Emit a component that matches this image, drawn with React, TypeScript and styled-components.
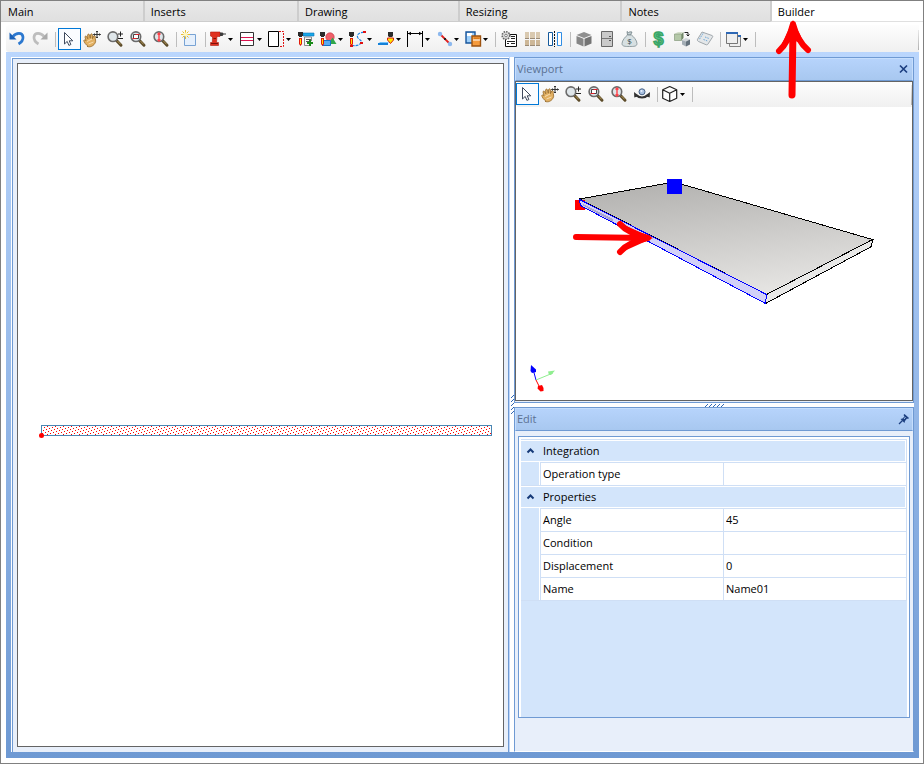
import React from "react";
import styled, { createGlobalStyle, css } from "styled-components";

const line = "#6f9ad3";
const gridLine = "#cfdff5";
const gridFill = "#d3e5fb";
const panelFill = "#e8effa";
const canvasEdge = "#646464";

const GlobalStyle = createGlobalStyle`
  *, *::before, *::after { box-sizing: border-box; }
  html, body, #root { height: 100%; margin: 0; }
  body { font-family: "Open Sans", "Noto Sans", sans-serif; font-size: 11px; line-height: 16px; color: #000; background: #fff; }
  button, input { font: inherit; color: inherit; }
`;

const Window = styled.div`
  display: flex;
  flex-direction: column;
  min-height: 100%;
  border: 1px solid #808080;
  background: #fff;
`;

const TabBar = styled.nav`
  display: flex;
  height: 21px;
`;

const Tab = styled.button<{ $grow: number; $active?: boolean }>`
  position: relative;
  flex: ${(p) => p.$grow} 1 0;
  min-width: 0;
  padding: 2px 0 0 6px;
  border: 0;
  border-left: 2px solid #cdcdcd;
  border-bottom: 1px solid ${(p) => (p.$active ? "#e0e0e0" : "#cdcdcd")};
  background: ${(p) => (p.$active ? "#fff" : "linear-gradient(#e8e8e8, #e0e0e0)")};
  text-align: left;
  &:first-child { border-left: 0; padding-left: 7px; }
`;

const TabPointer = styled.svg`
  position: absolute;
  top: 18px;
  left: 3px;
  z-index: 2;
  pointer-events: none;
`;

const Body = styled.main`
  flex: 1;
  display: flex;
  flex-direction: column;
  padding: 3px 4px 5px 5px;
`;

const ToolStrip = styled.div<{ $compact?: boolean }>`
  display: flex;
  align-items: flex-start;
  height: ${(p) => (p.$compact ? 25 : 27)}px;
  padding-top: ${(p) => (p.$compact ? 1 : 3)}px;
  border-radius: 3px 0 0 3px;
  background: linear-gradient(#fdfdfd, #f0f0f0);
  &::after {
    content: "";
    width: 1px;
    height: 20px;
    margin: 2px 0 0 auto;
    background: linear-gradient(#e8e8e8, #b0b0b0);
  }
`;

const ToolButton = styled.button<{ $split?: boolean; $active?: boolean }>`
  display: flex;
  align-items: center;
  flex: none;
  width: ${(p) => (p.$split ? 29 : 23)}px;
  height: 22px;
  padding: 0;
  border: 1px solid ${(p) => (p.$active ? "#0078d7" : "transparent")};
  background: ${(p) => (p.$active ? "#fafcff" : "transparent")};
`;

const IconSvg = styled.svg`
  flex: none;
  width: 20px;
  height: 20px;
`;

const DropArrow = styled.svg`
  flex: none;
  width: 5px;
  height: 3px;
  margin-left: -1px;
`;

const ToolSeparator = styled.span`
  flex: none;
  width: 6px;
  height: 15px;
  margin-top: 4px;
  background: linear-gradient(#bdbdbd, #bdbdbd) 3px 0 / 1px 100% no-repeat;
`;

const Workspace = styled.div`
  flex: 1;
  display: flex;
  padding: 5px 5px 6px 5px;
  background: linear-gradient(#bad6fd, #6e99d3);
`;

const Columns = styled.div`
  flex: 1;
  display: grid;
  grid-template-columns: minmax(0, 497fr) 5px minmax(0, 400fr);
  padding-left: 1px;
  background: #fff;
`;

const PlanPanel = styled.section`
  display: flex;
  margin-top: 1px;
  padding: 4px 4px 5px;
  border: 1px solid ${line};
  border-bottom: 0;
  background: ${panelFill};
`;

const PlanCanvas = styled.div`
  flex: 1;
  display: flex;
  border: 1px solid ${canvasEdge};
  background: #fff;
`;

const Drawing = styled.svg`
  flex: 1;
  display: block;
  min-width: 0;
  min-height: 0;
`;

const ColumnSplitter = styled.div`
  display: flex;
  align-items: center;
  justify-content: center;
  border-left: 1px solid #bfd7fb;
`;

const RowSplitter = styled.div`
  display: flex;
  align-items: center;
  justify-content: center;
`;

const Stack = styled.div`
  display: grid;
  grid-template-rows: minmax(0, 346fr) 4px minmax(0, 345fr);
`;

const Panel = styled.section<{ $open?: boolean }>`
  display: flex;
  flex-direction: column;
  min-height: 0;
  border: 1px solid ${line};
  ${(p) => p.$open && css`border-bottom-color: #fff;`}
  background: ${panelFill};
`;

const PanelHeader = styled.header`
  display: flex;
  align-items: center;
  flex: none;
  height: 23px;
  padding: 0 2px 2px 1px;
  border: 1px solid #c6defd;
  border-bottom: 1px solid ${line};
  background: linear-gradient(#b6d3fb, #a8c8f0);
`;

const PanelTitle = styled.h2`
  flex: 1;
  margin: 0;
  font-size: 11px;
  font-weight: 400;
  color: #5b7193;
`;

const HeaderButton = styled.button`
  display: flex;
  padding: 0;
  border: 0;
  background: none;
`;

const ViewBox = styled.div`
  flex: 1;
  display: flex;
  flex-direction: column;
  min-height: 0;
  margin-bottom: 1px;
  border: 1px solid ${canvasEdge};
  background: #fff;
`;

const PropertyBox = styled.div`
  flex: 1;
  margin: 5px 3px 33px;
  padding: 2px 2px 0;
  border: 1px solid ${line};
  background: linear-gradient(${gridFill}, ${gridFill}) content-box, #fff;
`;

const PropertyTable = styled.table`
  width: 100%;
  table-layout: fixed;
  border-spacing: 0;
  border-bottom: 1px solid ${gridLine};
`;

const GutterCell = styled.td`
  padding: 0;
  border-right: 1px solid #fff;
  background: ${gridFill};
`;

const CategoryCell = styled.th`
  height: 23px;
  padding: 0;
  border-top: 1px solid ${gridLine};
  border-right: 1px solid ${gridLine};
  font-weight: 400;
  text-align: left;
`;

const CategoryButton = styled.button`
  display: flex;
  align-items: center;
  gap: 8px;
  width: 100%;
  height: 22px;
  padding: 0 0 0 5px;
  border: solid #fff;
  border-width: 1px 1px 1px 0;
  background: ${gridFill};
  text-align: left;
`;

const NameCell = styled.th`
  height: 23px;
  padding: 0 2px;
  border-top: 1px solid ${gridLine};
  border-left: 1px solid ${gridLine};
  background: #fff;
  font-weight: 400;
  text-align: left;
`;

const ValueCell = styled.td`
  height: 23px;
  padding: 0 2px;
  border: solid ${gridLine};
  border-width: 1px 1px 0 1px;
  background: #fff;
`;

const ValueInput = styled.input`
  display: block;
  width: 100%;
  height: 16px;
  line-height: 16px;
  padding: 0;
  border: 0;
  background: transparent;
  outline: none;
`;

const lens = (
  <>
    <path d="M11.5 11.5l4.5 4.7" stroke="#5b4a28" strokeWidth="3" strokeLinecap="round" />
    <path d="M12.5 12l3.2 3.4" stroke="#b39a5c" strokeWidth="1" />
    <circle cx="7.9" cy="7.7" r="4.8" fill="#dfe6ea" stroke="#6b6b6b" strokeWidth="1.6" />
  </>
);

const marker = (x: number) => (
  <>
    <path d={`M${x} 3h5v4h-1v1h-3v-1h-1z`} fill="#2b2b2b" />
    <path d={`M${x + 1} 9h3v6l-1.5 2-1.5-2z`} fill="#e11b0c" />
    <path d={`M${x + 2} 10h1v5h-1z`} fill="#ffe600" />
  </>
);

const hand = (
  <>
    <path d="M6 17.3C3.8 15.8 2 12.9 1.7 11.6c.4-.9 1.3-.8 2.3.2L3 8c0-1.2 1.3-1.3 1.8-.2l1 2L5.6 6c.2-1.2 1.6-1.2 1.9 0l.8 3.2.3-3.6c.3-1.1 1.6-1 1.8.1l.1 3.900 1.100-2.600c.6-.9 1.700-.4 1.600.6-.4 2.400 1.600 4.500-.5 7.100-1.500 2.400-5 4-7.600 2.600z" fill="#e2b062" stroke="#94682a" strokeWidth=".8" />
    <path d="M5 12.5l5-2.5M6.5 15l5-2" stroke="#f9ddb0" strokeWidth="1" />
    <path d="M15 2v7M11.5 5.5h7M14 3l1-1 1 1M14 8l1 1 1-1M12.5 4.500l-1 1 1 1M17.500 4.500l1 1-1 1" stroke="#333" strokeWidth="1" fill="none" />
  </>
);

const icons: Record<string, React.ReactNode> = {
  undo: (
    <>
      <path d="M6 7.5C9 3.5 15.5 3 16 8c.2 3.500-2 5.600-4.500 7" fill="none" stroke="#2c78cf" strokeWidth="2.7" />
      <path d="M2.5 3.500v7H9.500z" fill="#1c62b8" />
    </>
  ),
  redo: (
    <>
      <path d="M14 7.5C11 3.5 4.5 3 4 8c-.2 3.500 2 5.600 4.500 7" fill="none" stroke="#bdbdbd" strokeWidth="2.7" />
      <path d="M17.5 3.500v7h-7z" fill="#aaa" />
    </>
  ),
  pointer: <path d="M5.5 3.5v11.5l2.7-2.6 1.700 4 2-.9-1.700-3.700h3.600z" fill="#fff" stroke="#3f4a5e" />,
  hand,
  zoom: (
    <>
      {lens}
      <path d="M13 5h5M15.5 2.500v5M13 9.500h5" stroke="#222" fill="none" />
    </>
  ),
  zoomArea: (
    <>
      {lens}
      <path d="M5.500 5.500h5v4h-5z" fill="#fff" stroke="#444" />
      <path d="M4.500 9.500h4M7.500 5.500h4" stroke="#e0202a" strokeWidth="1.2" />
    </>
  ),
  zoomFit: (
    <>
      {lens}
      <path d="M8 4v8M6.500 5.500L8 4l1.500 1.500M6.500 10.500L8 12l1.500-1.500" stroke="#ff4048" strokeWidth="1.400" fill="none" />
    </>
  ),
  create: (
    <>
      <path d="M4.5 5.5h11v11h-11z" fill="#e6f0fc" stroke="#78a3d4" />
      <path d="M5.5 1v9M1 5.5h9M2.5 2.5l6 6M8.5 2.5l-6 6" stroke="#e8bf2e" strokeWidth="1" />
      <circle cx="5.5" cy="5.5" r="2" fill="#fff6bc" />
    </>
  ),
  drill: (
    <>
      <path d="M1.5 3H11v4.500H8l-.5 6H9.500v3h-8v-3h1.800L3.500 8 1.500 7z" fill="#e0301f" stroke="#b01c10" strokeWidth=".6" />
      <path d="M4.500 9.500H7M2 14.500h7" stroke="#7d1009" />
      <path d="M11 3.500h2.500l1 1H17v1h-2.500l-1 1.500H11z" fill="#3c3c3c" />
    </>
  ),
  panelRows: (
    <>
      <path d="M2.5 3.5h13v13h-13z" fill="#fff" stroke="#333" />
      <path d="M3 8.500h12M3 11.500h12" stroke="#dc1450" />
    </>
  ),
  extend: (
    <>
      <path d="M12 2.500h4.500v15H12" fill="none" stroke="#e01010" strokeDasharray="2 1" />
      <path d="M1.500 2.500h10v15h-10z" fill="#fff" stroke="#000" />
    </>
  ),
  listAdd: (
    <>
      <path d="M8.500 8v8.500h5M8.500 8h7v4" fill="#f6f6f6" stroke="#888" />
      <path d="M10 10.500h5M10 12.500h3" stroke="#555" />
      <path d="M7 4h11v3H7z" fill="#18a8e8" stroke="#0a6fb5" strokeWidth=".6" />
      <path d="M14 11v6M11 14h6" stroke="#188a18" strokeWidth="2" />
      {marker(2)}
    </>
  ),
  shapes: (
    <>
      <circle cx="11" cy="8" r="4.2" fill="#f0606a" stroke="#c0303a" strokeWidth=".6" />
      <path d="M13.500 8.500l4 6.500h-8z" fill="#2fa64b" />
      <path d="M3.500 11.500h8v5h-8z" fill="#58aaf2" stroke="#1673c9" />
      {marker(1)}
    </>
  ),
  spline: (
    <>
      <path d="M16 3.500C11 3 8 6 10 9c2 2.500 5 3 2.500 5.500-2 2.200-5 2.200-9 2" fill="none" stroke="#1c86e6" strokeWidth="1.2" strokeDasharray="3 1" />
      <path d="M15 2h3v2h-3zM12 13h3v2h-3zM2 16h3v2H2z" fill="#e01010" />
      {marker(1)}
    </>
  ),
  edge: (
    <>
      <path d="M1 15h9l2-2H3z" fill="#6fc1fa" />
      <path d="M1 14h10v2H1z" fill="#1480d8" />
      <path d="M11 3h5v4l-1 1h-3l-1-1z" fill="#2b2b2b" />
      <path d="M10.500 9h6v2l-3 3.500-3-3.500z" fill="#ffe600" stroke="#d8200c" />
    </>
  ),
  dimension: (
    <>
      <path d="M1.500 2v16M16.500 2v16M2 4.500h15" stroke="#000" />
      <path d="M2 4.500l3-1.700v3.400zM16 4.500l-3-1.700v3.400z" fill="#000" />
    </>
  ),
  segment: (
    <>
      <path d="M5 5l9.500 9.500" stroke="#e02020" strokeWidth="1.8" />
      <circle cx="5" cy="5" r="2.200" fill="#8cb8ee" />
      <circle cx="15" cy="15" r="2.200" fill="#8cb8ee" />
      <path d="M9 9h2v2H9z" fill="#222" />
    </>
  ),
  duplicate: (
    <>
      <path d="M2 3h9v11H2z" fill="#9fd0fb" stroke="#17549b" strokeWidth="1.400" />
      <path d="M3 4h5v3H3z" fill="#fff" />
      <path d="M8 7h8.500v10H8z" fill="#f59a3c" stroke="#9d5310" strokeWidth="1.400" />
      <path d="M9 11h7" stroke="#fff" />
      <path d="M10 8.500h5V10h-5z" fill="#d97a1c" />
    </>
  ),
  sheet: (
    <>
      <path d="M6.500 5.500h11v12h-11z" fill="#fff" stroke="#111" />
      <path d="M12 7.500h4M12 9.500h4M8 12.500h8M8 14.500h2M12 14.500h4" stroke="#222" />
      <circle cx="7" cy="6.500" r="3.800" fill="#ddd" stroke="#666" strokeDasharray="1.500 1" strokeWidth="1.600" />
      <circle cx="7" cy="6.500" r="1.300" fill="#fff" stroke="#555" strokeWidth=".7" />
    </>
  ),
  tiles: (
    <>
      <path d="M3 3h4v6H3zM8 3h5v6H8zM14 3h4v6h-4z" fill="#d9c9b0" />
      <path d="M3 11h4v5H3zM8 11h5v5H8zM14 11h4v5h-4z" fill="#cdb797" />
      <path d="M3 9h4v1H3zM8 9h5v1H8zM14 9h4v1h-4zM3 16h4v1H3zM8 16h5v1H8zM14 16h4v1h-4z" fill="#9a8a76" />
    </>
  ),
  mirror: (
    <>
      <path d="M3.500 3.500h4v13h-4z" fill="#fff" stroke="#155a9c" />
      <path d="M12.500 3.500h4v13h-4z" fill="#fff" stroke="#2f8de4" />
      <path d="M9.500 2v16" stroke="#111" strokeDasharray="2 1" />
    </>
  ),
  block: (
    <>
      <path d="M10 3l7.500 3L10 9 2.500 6z" fill="#8f8f8f" />
      <path d="M2.500 7l7 2.800V17.500l-7-3z" fill="#868686" />
      <path d="M17.500 7l-7 2.800V17.500l7-3z" fill="#747474" />
    </>
  ),
  cabinet: (
    <>
      <path d="M4.500 2.500h11v15h-11z" fill="#cacaca" stroke="#686868" />
      <path d="M5 9.500h10" stroke="#777" />
      <path d="M12 7.500h2M12 11.500h2" stroke="#555" />
    </>
  ),
  budget: (
    <>
      <path d="M7 2.500l1.500 1 1.500-.7 2 .2-1.500 3h-3z" fill="#c4cfd2" stroke="#6f7f84" strokeWidth=".8" />
      <path d="M7.500 6h4c2 1.500 5.500 5.500 5.500 8.500 0 3-3 3-7.500 3s-7.500 0-7.500-3C2 11.500 5.500 7.500 7.500 6z" fill="#d7e0e2" stroke="#7c8b90" strokeWidth=".8" />
      <text x="9.5" y="15" fontSize="8" textAnchor="middle" fill="#33474d">$</text>
    </>
  ),
  price: (
    <text x="9.500" y="16" fontFamily="Liberation Sans, sans-serif" fontSize="18" fontWeight="700" textAnchor="middle" fill="#5cc487" stroke="#3aa567" strokeWidth="1.400">$</text>
  ),
  convert: (
    <>
      <path d="M3 4.500l3-1.500h5l-2 2z" fill="#d5e0ca" />
      <path d="M2.500 5h7v6.500h-7z" fill="#b4c8a8" stroke="#869b7c" strokeWidth=".7" />
      <path d="M9.500 5l2-2v6l-2 2.500z" fill="#718766" />
      <path d="M10 11l4-2 4 1.500-4 2z" fill="#cfd4d8" />
      <path d="M10 11l4 1.500v5l-4-2z" fill="#a3adb5" />
      <path d="M14 12.500l4-2v5l-4 2z" fill="#64717c" />
      <path d="M12.500 3.500h3.500v3.500M14.500 5.500l1.500 1.500 1.500-1.500" fill="none" stroke="#222" />
    </>
  ),
  tag: (
    <>
      <path d="M7 3l10 3.500c1 .4.8 1.200.4 1.800L13 15c-.5.8-1.200 1-2 .7L3.500 12.500c-1-.5-1.500-1.500-.8-2.500z" fill="#e4e7e9" stroke="#969ea4" strokeWidth=".9" />
      <path d="M8 4.500L4 11M10 8l4 1.500M8.500 10.500l4 1.500" stroke="#6ea8d8" strokeDasharray="1.500 1" />
    </>
  ),
  windows: (
    <>
      <path d="M5.500 6.500h11v11h-11z" fill="#eee" stroke="#828282" />
      <path d="M14 6h3v2h-3z" fill="#2e68b5" />
      <path d="M2.500 3.500h11v11h-11z" fill="#efefef" stroke="#777" />
      <path d="M2 3h12v2H2z" fill="#2e68b5" />
    </>
  ),
  orbit: (
    <>
      <circle cx="10" cy="7.800" r="3" fill="#a8c0e0" stroke="#4a6488" />
      <circle cx="9.500" cy="7" r="1" fill="#eaf2ff" />
      <path d="M4 11c3 3.300 9 3.300 12 0" fill="none" stroke="#333" strokeWidth="2" />
      <path d="M2 8l.3 5.500L7 12zM18 8l-.3 5.500L13 12z" fill="#333" />
    </>
  ),
  box: (
    <path d="M8.700 2.500l7 3.300v8.400l-7 3.300-7-3.300V5.800zM1.700 5.800l7 3.400 7-3.400M8.700 9.200v8.300" fill="#fff" stroke="#222" strokeWidth="1.200" strokeLinejoin="round" />
  ),
};

type ToolDef = { icon: string; label: string; split?: boolean; active?: boolean } | null;

const t = (icon: string, label: string): ToolDef => ({ icon, label });
const menu = (icon: string, label: string): ToolDef => ({ icon, label, split: true });

const mainTools: ToolDef[] = [
  t("undo", "Undo"), t("redo", "Redo"), null,
  { icon: "pointer", label: "Select", active: true }, t("hand", "Pan"), t("zoom", "Zoom"),
  t("zoomArea", "Zoom area"), t("zoomFit", "Zoom to fit"), null,
  t("create", "New"), null,
  menu("drill", "Drilling"), menu("panelRows", "Panel"), menu("extend", "Extend"),
  t("listAdd", "Add operation"), menu("shapes", "Shapes"), menu("spline", "Contour"),
  menu("edge", "Edge"), menu("dimension", "Dimension"), menu("segment", "Line"),
  menu("duplicate", "Duplicate"), null,
  t("sheet", "Drawing sheet"), t("tiles", "Materials"), t("mirror", "Mirror"), null,
  t("block", "Solid"), t("cabinet", "Cabinet"), t("budget", "Budget"), null,
  t("price", "Price"), t("convert", "Convert"), t("tag", "Label"), null,
  menu("windows", "Windows"), null,
];

const viewTools: ToolDef[] = [
  { icon: "pointer", label: "Select", active: true }, t("hand", "Pan"), t("zoom", "Zoom"),
  t("zoomArea", "Zoom area"), t("zoomFit", "Zoom to fit"), t("orbit", "Orbit"), null,
  menu("box", "View"), null,
];

function Tools({ items, compact }: { items: ToolDef[]; compact?: boolean }) {
  return (
    <ToolStrip $compact={compact} role="toolbar">
      {items.map((item, i) =>
        item ? (
          <ToolButton key={i} $split={item.split} $active={item.active} aria-label={item.label}>
            <IconSvg viewBox="0 0 20 20" fill="none">{icons[item.icon]}</IconSvg>
            {item.split && (
              <DropArrow viewBox="0 0 5 3"><path d="M0 0h5L2.500 3z" fill="#000" /></DropArrow>
            )}
          </ToolButton>
        ) : (
          <ToolSeparator key={i} />
        )
      )}
    </ToolStrip>
  );
}

const tabs = [
  { label: "Main", grow: 142 },
  { label: "Inserts", grow: 154 },
  { label: "Drawing", grow: 161 },
  { label: "Resizing", grow: 163 },
  { label: "Notes", grow: 149 },
  { label: "Builder", grow: 153, active: true },
];

const groups = [
  { name: "Integration", rows: [["Operation type", ""]] },
  { name: "Properties", rows: [["Angle", "45"], ["Condition", ""], ["Displacement", "0"], ["Name", "Name01"]] },
];

function Plan() {
  return (
    <Drawing viewBox="0 0 485 682">
      <defs>
        <pattern id="stipple" width="8" height="8" patternUnits="userSpaceOnUse" x="24" y="362">
          <path d="M5 0h1v1h-1zM2 1h1v1h-1zM7 2h1v1h-1zM4 3h1v1h-1zM1 4h1v1h-1zM6 5h1v1h-1zM3 6h1v1h-1zM0 7h1v1h-1z" fill="#f00" />
        </pattern>
      </defs>
      <g shapeRendering="crispEdges">
        <rect x="23.500" y="361.500" width="450" height="10" fill="url(#stipple)" stroke="#4a86b4" />
      </g>
      <circle cx="23.500" cy="371.500" r="2.500" fill="#f00" />
    </Drawing>
  );
}

function Scene() {
  return (
    <Drawing viewBox="0 0 396 293">
      <defs>
        <linearGradient id="top" x1="0.300" y1="0" x2="0.600" y2="1">
          <stop offset="0" stopColor="#b4b3b1" />
          <stop offset="1" stopColor="#e6e5e3" />
        </linearGradient>
      </defs>
      <g shapeRendering="crispEdges">
        <path d="M63.500 92L158 75 356.500 132.500 250.500 187.500z" fill="url(#top)" stroke="#000" />
        <path d="M59 93h10v10H59z" fill="#f00" />
        <path d="M250.500 187.500L356.500 132.500 355.500 139.500 249.500 196.500z" fill="#e9e9e8" stroke="#000" />
        <path d="M63.500 92.500L250.500 187.500 249.500 196.500 64.500 98.500z" fill="#d3d1f8" stroke="#00f" />
        <path d="M67 97l30 15v3L66 98z" fill="#a9a6d0" />
      </g>
      <path d="M151 72h15v15h-15z" fill="#00f" />
      <g fill="none" stroke="#f00" strokeWidth="6" strokeLinecap="round" strokeLinejoin="round">
        <path d="M60 130l70 1" />
        <path d="M104 117c6 7 16 11 28 14-12 2-22 7-28 14" />
      </g>
      <path d="M106 117l31 14-31 14 11-14z" fill="#f00" />
      <path d="M20 273l-3-11" stroke="#00f" />
      <path d="M20 273l17-7" stroke="#90ee90" />
      <path d="M20 273l4 8" stroke="#f00" />
      <path d="M15 258l5 4.500v2.500l-4 1-1.500-2z" fill="#00f" />
      <path d="M32 264.500l7-1-4 4.500h-2z" fill="#90ee90" />
      <path d="M22 279l4-1 1.500 3v3l-3 .5-3-3z" fill="#f00" />
    </Drawing>
  );
}

export default function App() {
  return (
    <>
      <GlobalStyle />
      <Window>
        <TabBar>
          {tabs.map((tab) => (
            <Tab key={tab.label} $grow={tab.grow} $active={tab.active}>
              {tab.label}
              {tab.active && (
                <TabPointer width="40" height="82" viewBox="0 0 40 82" aria-hidden="true">
                  <path d="M18 9l-1 67" stroke="#f00" strokeWidth="7" strokeLinecap="round" />
                  <path d="M18 5C15 17 11 26 4 32M18 5c3 12 8 20 15 26" fill="none" stroke="#f00" strokeWidth="6" strokeLinecap="round" />
                  <path d="M18 1l12 25-12-5-13 8z" fill="#f00" />
                </TabPointer>
              )}
            </Tab>
          ))}
        </TabBar>
        <Body>
          <Tools items={mainTools} />
          <Workspace>
            <Columns>
              <PlanPanel aria-label="Plan">
                <PlanCanvas><Plan /></PlanCanvas>
              </PlanPanel>
              <ColumnSplitter>
                <svg width="3" height="19" viewBox="0 0 3 19">
                  <path d="M0 3l3-3M0 7l3-3M0 11l3-3M0 15l3-3M0 19l3-3" stroke="#2f66b4" />
                </svg>
              </ColumnSplitter>
              <Stack>
                <Panel>
                  <PanelHeader>
                    <PanelTitle>Viewport</PanelTitle>
                    <HeaderButton aria-label="Close viewport">
                      <svg width="13" height="12" viewBox="0 0 13 12">
                        <path d="M3 2.500l7 7M10 2.500l-7 7" stroke="#1c3f80" strokeWidth="1.700" />
                      </svg>
                    </HeaderButton>
                  </PanelHeader>
                  <ViewBox>
                    <Tools items={viewTools} compact />
                    <Scene />
                  </ViewBox>
                </Panel>
                <RowSplitter>
                  <svg width="19" height="3" viewBox="0 0 19 3">
                    <path d="M0 3l3-3M4 3l3-3M8 3l3-3M12 3l3-3M16 3l3-3" stroke="#2f66b4" />
                  </svg>
                </RowSplitter>
                <Panel $open>
                  <PanelHeader>
                    <PanelTitle>Edit</PanelTitle>
                    <HeaderButton aria-label="Pin panel">
                      <svg width="13" height="12" viewBox="0 0 13 12">
                        <path d="M7.500 1l4.500 4-1 1-1-.5L8 8l-.5 2L3.500 6l2-.5L7.500 3.500 6.500 2z" fill="#1c3f80" />
                        <path d="M5.500 7.500L2 11" stroke="#1c3f80" strokeWidth="1.200" />
                        <path d="M8.500 4L7 6" stroke="#a8c8f0" />
                      </svg>
                    </HeaderButton>
                  </PanelHeader>
                  <PropertyBox>
                    <PropertyTable>
                      <colgroup>
                        <col width="19" />
                        <col width="183" />
                        <col />
                      </colgroup>
                      {groups.map((group) => (
                        <tbody key={group.name}>
                          <tr>
                            <CategoryCell colSpan={3} scope="colgroup">
                              <CategoryButton aria-expanded="true">
                                <svg width="9" height="8" viewBox="0 0 9 8">
                                  <path d="M1.500 5.500l3-3 3 3" fill="none" stroke="#173a78" strokeWidth="2" />
                                </svg>
                                {group.name}
                              </CategoryButton>
                            </CategoryCell>
                          </tr>
                          {group.rows.map(([name, value]) => (
                            <tr key={name}>
                              <GutterCell />
                              <NameCell scope="row">{name}</NameCell>
                              <ValueCell><ValueInput aria-label={name} defaultValue={value} /></ValueCell>
                            </tr>
                          ))}
                        </tbody>
                      ))}
                    </PropertyTable>
                  </PropertyBox>
                </Panel>
              </Stack>
            </Columns>
          </Workspace>
        </Body>
      </Window>
    </>
  );
}
